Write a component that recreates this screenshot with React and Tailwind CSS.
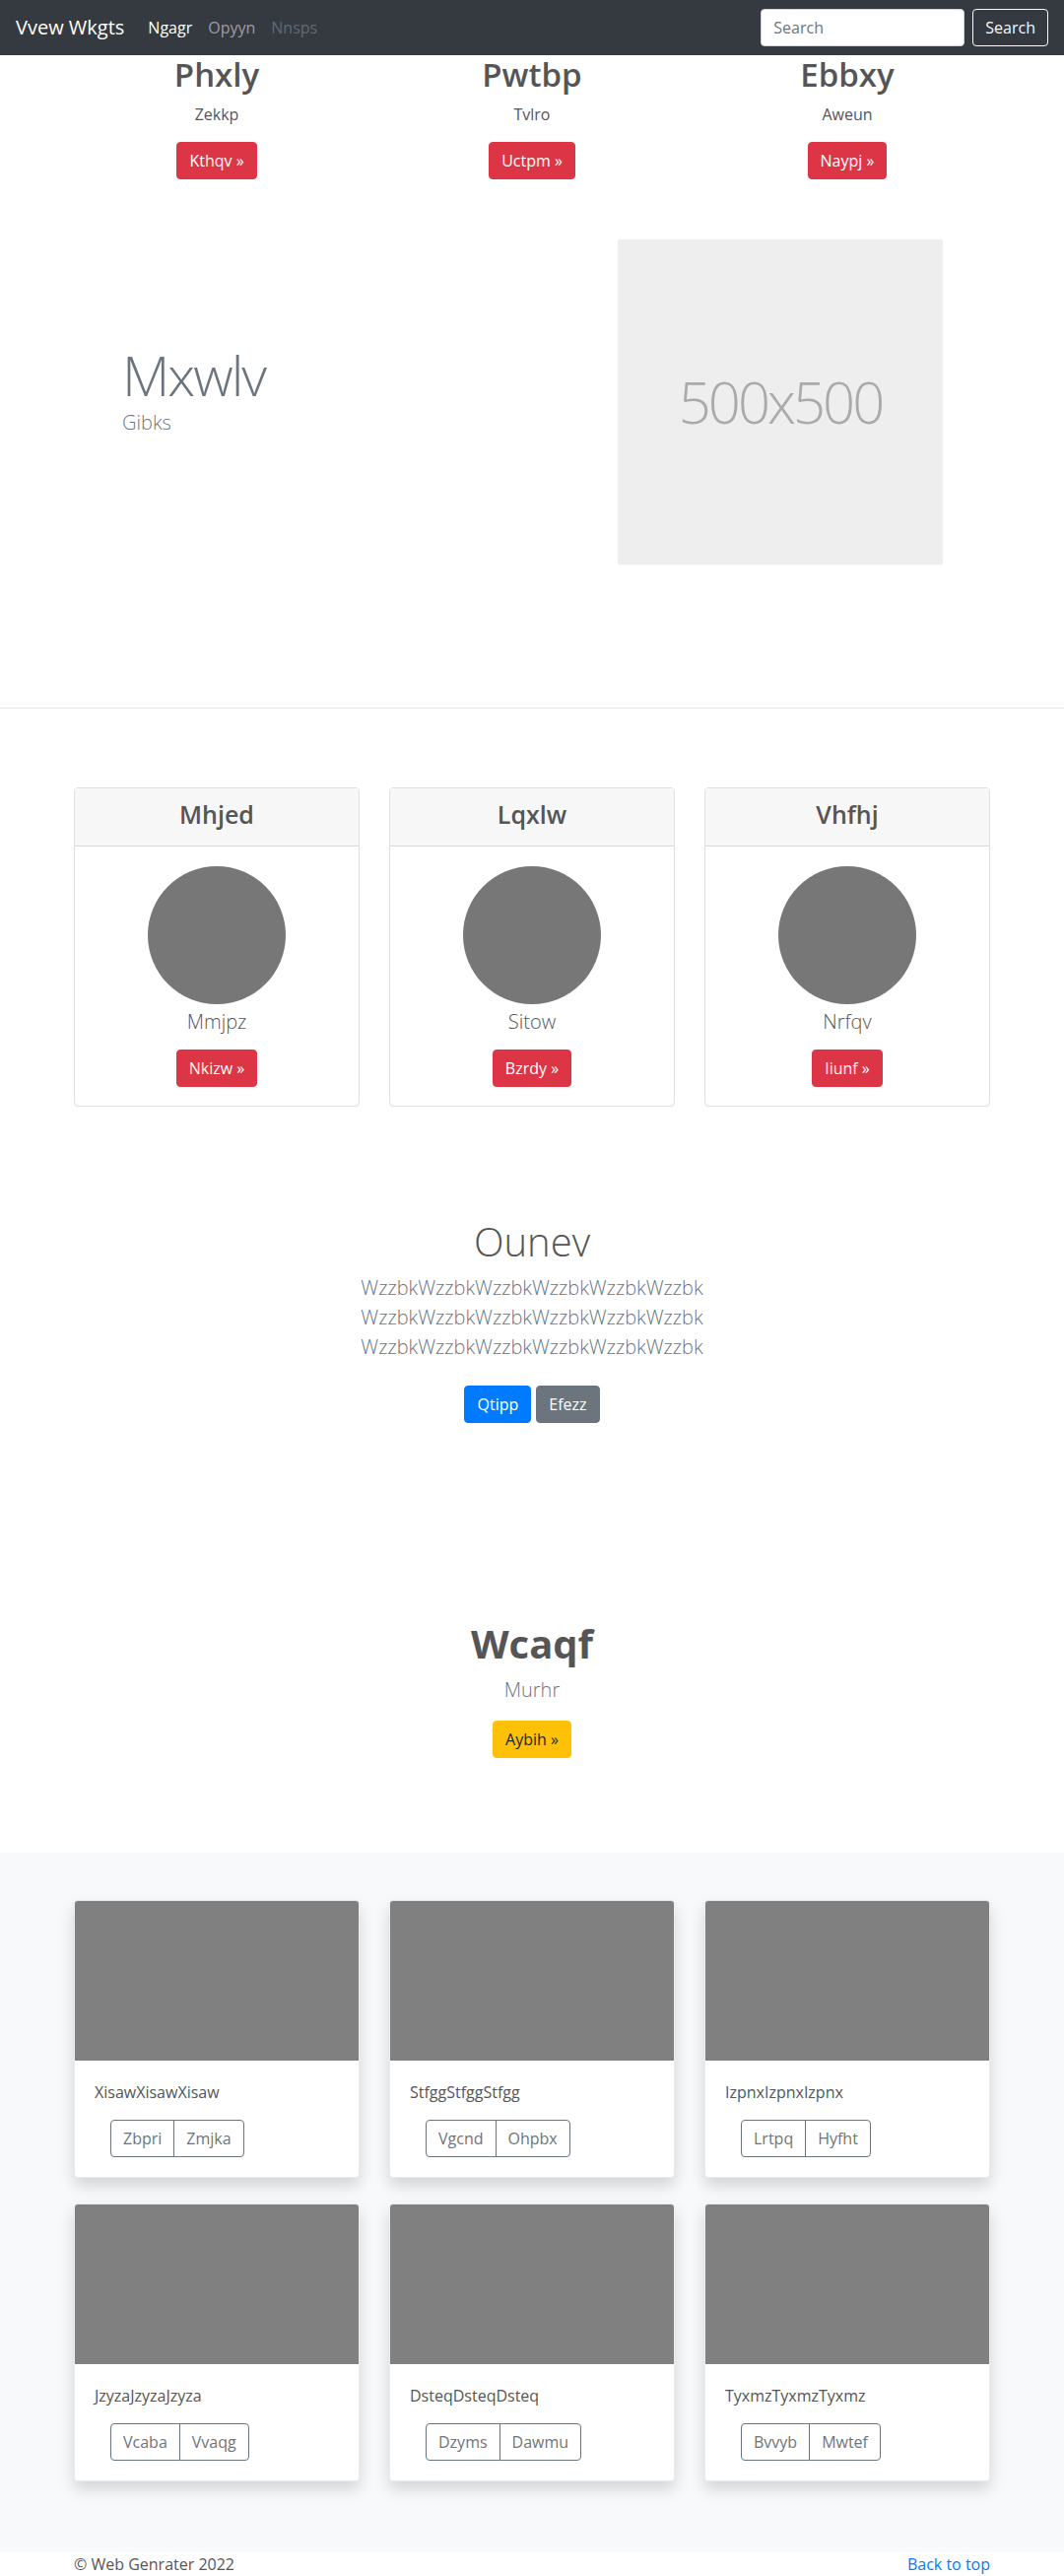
import React from 'react';

const features = [
  { title: 'Phxly', text: 'Zekkp', button: 'Kthqv »' },
  { title: 'Pwtbp', text: 'Tvlro', button: 'Uctpm »' },
  { title: 'Ebbxy', text: 'Aweun', button: 'Naypj »' },
];

const profiles = [
  { title: 'Mhjed', name: 'Mmjpz', button: 'Nkizw »' },
  { title: 'Lqxlw', name: 'Sitow', button: 'Bzrdy »' },
  { title: 'Vhfhj', name: 'Nrfqv', button: 'Iiunf »' },
];

const albums = [
  { text: 'XisawXisawXisaw', left: 'Zbpri', right: 'Zmjka' },
  { text: 'StfggStfggStfgg', left: 'Vgcnd', right: 'Ohpbx' },
  { text: 'IzpnxIzpnxIzpnx', left: 'Lrtpq', right: 'Hyfht' },
  { text: 'JzyzaJzyzaJzyza', left: 'Vcaba', right: 'Vvaqg' },
  { text: 'DsteqDsteqDsteq', left: 'Dzyms', right: 'Dawmu' },
  { text: 'TyxmzTyxmzTyxmz', left: 'Bvvyb', right: 'Mwtef' },
];

const App = () => {
  return (
    <div className="min-h-[2614px] bg-white font-['Open_Sans',sans-serif] text-[#212529]">
      {/* Navbar */}
      <nav className="h-14 bg-[#343a40] px-4 flex items-center">
        <span className="text-xl text-white mr-4">Vvew Wkgts</span>
        <div className="flex text-base">
          <span className="px-2 text-white">Ngagr</span>
          <span className="px-2 text-white/50">Opyyn</span>
          <span className="px-2 text-white/25">Nnsps</span>
        </div>
        <div className="ml-auto flex items-center gap-2">
          <input
            placeholder="Search"
            className="w-[207px] h-[38px] px-3 bg-white border border-[#ced4da] rounded text-base text-[#495057] placeholder:text-[#6c757d] outline-none"
          />
          <button className="h-[38px] px-3 border border-[#f8f9fa] rounded text-base text-[#f8f9fa]">Search</button>
        </div>
      </nav>

      {/* Top columns */}
      <div className="w-[960px] mx-auto px-[15px]">
        <div className="grid grid-cols-3 gap-[30px] text-center">
          {features.map((f) => (
            <div key={f.title}>
              <h2 className="text-[33px] leading-[1.2] font-semibold text-[#555] mb-2">{f.title}</h2>
              <p className="text-base leading-6 text-[#555] mb-4">{f.text}</p>
              <p className="mb-4">
                <span className="inline-block px-3 py-1.5 border border-[#dc3545] text-base leading-6 rounded bg-[#dc3545] text-white">{f.button}</span>
              </p>
            </div>
          ))}
        </div>
      </div>

      {/* Featurette */}
      <div className="w-[960px] mx-auto px-[15px] mt-[45px] flex">
        <div className="w-[552px] pl-[49px] pt-[104px]">
          <h1 className="text-[56px] leading-[1.2] font-light tracking-[-2px] text-[#6c757d]">Mxwlv</h1>
          <p className="text-xl leading-[30px] font-light text-[#6c757d]">Gibks</p>
        </div>
        <div className="w-[330px] h-[330px] bg-[#eeeeee] flex items-center justify-center">
          <span className="text-[58px] font-light text-[#aaaaaa] tracking-[-3px]">500x500</span>
        </div>
      </div>

      <hr className="mt-[145px] border-t border-[#e5e5e5]" />

      {/* Pricing-style cards */}
      <div className="w-[960px] mx-auto px-[15px] mt-[80px]">
        <div className="grid grid-cols-3 gap-[30px] text-center">
          {profiles.map((p) => (
            <div key={p.title} className="border border-black/[0.125] rounded">
              <div className="bg-[#f7f7f7] border-b border-black/[0.125] pt-[11px] pb-[17px]">
                <h4 className="text-[25px] leading-[1.2] font-semibold text-[#555]">{p.title}</h4>
              </div>
              <div className="pt-5 pb-[19px] flex flex-col items-center">
                <div className="w-[140px] h-[140px] rounded-full bg-[#777777]" />
                <p className="mt-[3px] text-xl leading-[30px] font-light text-[#555]">{p.name}</p>
                <span className="mt-[13px] inline-block px-3 py-1.5 border border-[#dc3545] text-base leading-6 rounded bg-[#dc3545] text-white">{p.button}</span>
              </div>
            </div>
          ))}
        </div>
      </div>

      {/* Jumbotron */}
      <section className="mt-[113px] text-center">
        <h1 className="text-[40px] leading-[1.2] font-light text-[#555] mb-2">Ounev</h1>
        <p className="text-xl leading-[30px] font-light text-[#6c757d] mb-6">
          <span className="block">WzzbkWzzbkWzzbkWzzbkWzzbkWzzbk</span>
          <span className="block">WzzbkWzzbkWzzbkWzzbkWzzbkWzzbk</span>
          <span className="block">WzzbkWzzbkWzzbkWzzbkWzzbkWzzbk</span>
        </p>
        <div className="flex justify-center gap-[5px]">
          <span className="px-3 py-1.5 border border-[#007bff] text-base leading-6 rounded bg-[#007bff] text-white">Qtipp</span>
          <span className="px-3 py-1.5 border border-[#6c757d] text-base leading-6 rounded bg-[#6c757d] text-white">Efezz</span>
        </div>
      </section>

      {/* Call out */}
      <section className="mt-[200px] text-center">
        <h1 className="text-[40px] leading-[1.2] font-bold text-[#555] mb-2">Wcaqf</h1>
        <p className="text-xl leading-[30px] font-light text-[#6c757d] mb-4">Murhr</p>
        <span className="inline-block px-3 py-1.5 border border-[#ffc107] text-base leading-6 rounded bg-[#ffc107] text-[#212529]">Aybih »</span>
      </section>

      {/* Album */}
      <section className="mt-[96px] bg-[#f8f9fa] pt-12 pb-[72px]">
        <div className="w-[960px] mx-auto px-[15px]">
          <div className="grid grid-cols-3 gap-x-[30px] gap-y-[26px]">
            {albums.map((a) => (
              <div key={a.text} className="bg-white rounded border border-black/[0.08] overflow-hidden shadow-[0_8px_16px_rgba(0,0,0,0.15)]">
                <div className="h-[162px] bg-[#808080]" />
                <div className="p-5">
                  <p className="text-base leading-6 text-[#555] mb-4">{a.text}</p>
                  <div className="ml-4 inline-flex">
                    <span className="px-3 py-1.5 text-base leading-6 text-[#6c757d] border border-[#6c757d] rounded-l">{a.left}</span>
                    <span className="-ml-px px-3 py-1.5 text-base leading-6 text-[#6c757d] border border-[#6c757d] rounded-r">{a.right}</span>
                  </div>
                </div>
              </div>
            ))}
          </div>
        </div>
      </section>

      {/* Footer */}
      <footer className="pb-12">
        <div className="w-[960px] mx-auto px-[15px] flex justify-between text-base leading-6">
          <p className="text-[#555]">© Web Genrater 2022</p>
          <a href="#" className="text-[#007bff]">Back to top</a>
        </div>
      </footer>
    </div>
  );
};

export default App;
